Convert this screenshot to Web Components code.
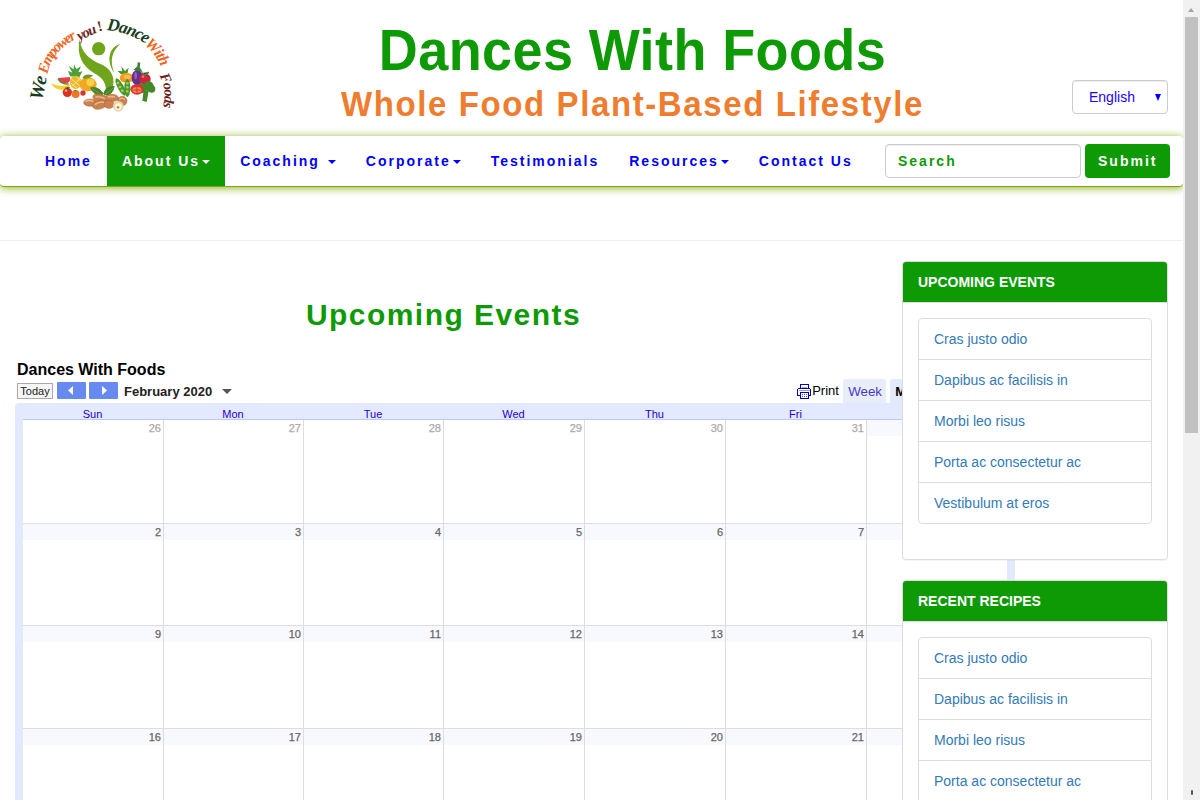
<!DOCTYPE html>
<html lang="en">
<head>
<meta charset="utf-8">
<title>Dances With Foods</title>
<style>
html,body{margin:0;height:100%;overflow:hidden;background:#fff}
body{font:14px/20px "Liberation Sans",Arial,sans-serif;color:#333}
</style>
</head>
<body>
<dwf-app></dwf-app>
<script>
const define = (name, html, init) => customElements.define(name, class extends HTMLElement {
  constructor() {
    super();
    this.attachShadow({ mode: 'open' }).innerHTML = typeof html === 'function' ? html(this) : html;
    if (init) init(this);
  }
});

define('dwf-logo', `
<style>:host{display:block;width:170px;height:115px}svg{display:block}text{font-family:"Liberation Serif",serif;font-style:italic;font-weight:bold}</style>
<svg width="170" height="115" viewBox="0 0 510 345">
  <defs>
    <path id="p1" d="M66 288L86 195"/><path id="p2" d="M82 208Q96 130 190 92"/><path id="p3" d="M178 107L265 68"/>
    <path id="p4" d="M260 76Q322 78 390 124"/><path id="p5" d="M372 120Q412 145 434 215"/><path id="p6" d="M418 212Q446 258 422 330"/>
  </defs>
  <text font-size="58" fill="#173c1c"><textPath href="#p1">We</textPath></text>
  <text font-size="45" fill="#f2661f" letter-spacing="-5.5"><textPath href="#p2">Empower</textPath></text>
  <text font-size="44" fill="#6c1f20" letter-spacing="-3"><textPath href="#p3">you !</textPath></text>
  <text font-size="52" fill="#173c1c" letter-spacing="-3"><textPath href="#p4">Dance</textPath></text>
  <text font-size="48" fill="#f2661f" letter-spacing="-3"><textPath href="#p5">With</textPath></text>
  <text font-size="43" fill="#6c1f20" letter-spacing="-3"><textPath href="#p6">Foods</textPath></text>
  <g fill="#6fa51c">
    <circle cx="236" cy="131" r="20"/>
    <path d="M179 103C184 145 210 164 243 178C279 193 290 230 272 262L256 270C263 236 249 220 222 204C187 184 169 150 179 103Z"/>
    <path d="M301 117C266 126 258 168 283 204C268 167 276 138 301 117Z"/>
  </g>
  <path d="M94 235Q120 250 152 238Q142 257 119 254Q101 251 94 235Z" fill="#f6cf2f"/>
  <path d="M114 219L150 216Q154 236 132 236Q119 234 114 219Z" fill="#e8414c"/><path d="M114 221Q122 238 146 237" fill="none" stroke="#4c962b" stroke-width="4"/>
  <path d="M150 214L144 197L157 203L146 183L161 193L162 178L169 192L183 184L175 202L187 199L178 217Z" fill="#4ca03b"/>
  <ellipse cx="167" cy="232" rx="17" ry="20" fill="#eeb72c"/><path d="M154 222L180 243M152 234L171 250M180 221L156 244M170 215L184 230" stroke="#fae68c" stroke-width="3"/>
  <ellipse cx="204" cy="238" rx="26" ry="21" fill="#f4a721"/><ellipse cx="211" cy="232" rx="12" ry="11" fill="#ffd04c"/><path d="M187 220Q193 204 219 211Q207 224 187 220Z" fill="#6b9b27"/>
  <circle cx="142" cy="262" r="14" fill="#d93325"/><circle cx="138" cy="257" r="4" fill="#ff9b7d"/>
  <circle cx="167" cy="267" r="12" fill="#ed7928"/><circle cx="189" cy="264" r="8" fill="#d33831"/><path d="M137 248L143 252L149 247M163 256L169 258" stroke="#397f2d" stroke-width="3"/>
  <path d="M303 208L292 197L307 199L304 184L315 198L326 188L322 208Z" fill="#4b9629"/>
  <ellipse cx="320" cy="219" rx="21" ry="15" fill="#f59a1e"/><ellipse cx="322" cy="215" rx="11" ry="6" fill="#ffbd51"/>
  <ellipse cx="352" cy="218" rx="17" ry="23" fill="#65308b"/><ellipse cx="347" cy="212" rx="4" ry="11" fill="#9564b0"/><path d="M340 195L352 184L353 172L361 173L359 187L368 201Z" fill="#378333"/>
  <circle cx="375" cy="222" r="17" fill="#ce213c"/><circle cx="369" cy="215" r="4" fill="#f06d77"/><path d="M366 204L375 209L387 202" stroke="#468734" stroke-width="5"/>
  <g fill="#438a27"><circle cx="365" cy="250" r="15"/><circle cx="386" cy="244" r="15"/><circle cx="395" cy="252" r="11"/><path d="M371 255L386 258L380 291L367 287Z"/></g>
  <ellipse cx="351" cy="253" rx="20" ry="16" fill="#d7342a"/><ellipse cx="351" cy="255" rx="14" ry="9" fill="#f48457"/><path d="M351 246V264M340 255H362" stroke="#d7342a" stroke-width="3"/>
  <g fill="#4c982a"><ellipse cx="302" cy="246" rx="9" ry="29" transform="rotate(-28 302 246)"/><ellipse cx="322" cy="249" rx="9" ry="27"/></g>
  <g fill="#a5cf55"><circle cx="294" cy="234" r="4"/><circle cx="300" cy="246" r="4"/><circle cx="307" cy="257" r="4"/><circle cx="322" cy="235" r="4"/><circle cx="322" cy="247" r="4"/><circle cx="322" cy="259" r="4"/></g>
  <path d="M210 248Q237 240 253 271Q223 276 210 248ZM284 243Q254 242 248 271Q280 275 284 243Z" fill="#478426"/><path d="M215 250L245 270M280 249L253 270" stroke="#86ad55" stroke-width="2"/>
  <g fill="#c9824f" stroke="#a86233" stroke-width="1.5">
    <ellipse cx="211" cy="293" rx="20" ry="11"/><ellipse cx="240" cy="279" rx="22" ry="11" transform="rotate(14 240 279)"/>
    <ellipse cx="275" cy="279" rx="21" ry="11"/><ellipse cx="239" cy="299" rx="22" ry="13" transform="rotate(-15 239 299)"/>
    <ellipse cx="267" cy="298" rx="15" ry="12"/><circle cx="307" cy="288" r="14"/>
  </g>
  <path d="M196 290Q210 282 220 290M226 276Q240 273 255 281M224 299Q238 288 252 292M263 275H285M298 283Q306 276 315 284" fill="none" stroke="#e8b488" stroke-width="5"/>
  <circle cx="295" cy="304" r="16" fill="#e8d4ab"/><circle cx="295" cy="305" r="10" fill="#fff6dc"/><circle cx="294" cy="307" r="4" fill="#bf8a5c"/>
</svg>`);

define('dwf-header', `
<style>
:host{display:grid;grid-template-columns:170px 1fr 96px;height:135px;box-sizing:border-box;padding:0 15px 0 20px}
dwf-logo{margin-top:5px}
.t{text-align:center;white-space:nowrap;font-weight:bold;padding-right:0;margin-left:3px}
h1,h2{margin:0;font-weight:bold}
h1{font-size:54px;line-height:60px;letter-spacing:.4px;color:#0e9a05;transform:scaleY(1.07);transform-origin:0 49px;padding-top:20px;height:60px}
h2{font-size:33px;line-height:40px;letter-spacing:1.6px;color:#ef7d30;transform:scaleY(1.05);margin-top:4px}
.s{align-self:start;margin-top:80px;width:96px;height:34px;box-sizing:border-box;border:1px solid #ccc;border-radius:4px;box-shadow:inset 0 1px 1px rgba(0,0,0,.075);display:flex;align-items:center;justify-content:space-between;padding:0 6px 0 16px;color:#1a00ff}
.s svg{display:block}
</style>
<dwf-logo></dwf-logo>
<div class="t"><h1>Dances With Foods</h1><h2>Whole Food Plant-Based Lifestyle</h2></div>
<div class="s"><span>English</span><svg width="6" height="7"><path d="M0 0H6L3 7Z" fill="#00f"/></svg></div>`);

define('nav-item', el => `
<style>
:host{display:block;padding:15px;line-height:20px;height:20px;white-space:nowrap}
:host([active]){background:#0e9a05;color:#fff}
i{display:inline-block;border:4px solid transparent;border-top-color:currentColor;border-bottom:0;margin-left:2px;vertical-align:middle}
</style><slot></slot>${el.hasAttribute('menu') ? '<i></i>' : ''}`);

define('dwf-nav', `
<style>
:host{display:flex;height:50px;margin-top:1px;padding:0 13px 0 30px;border-bottom:1px solid #7fa60d;border-radius:4px;background:#fff;box-shadow:0 1px 9px rgba(128,170,0,.9);font-weight:bold;letter-spacing:2px;color:#00f;clip-path:inset(-15px 0 -15px 0)}
.f{margin-left:auto;display:flex;gap:4px;align-items:center}
.f div{box-sizing:border-box;height:34px;border-radius:4px;line-height:20px}
.in{width:196px;padding:6px 12px;border:1px solid #ccc;box-shadow:inset 0 1px 1px rgba(0,0,0,.075);color:#0e9a05}
.b{width:85px;padding:7px 0 7px 13px;background:#0e9a05;color:#fff}
</style>
<nav-item>Home</nav-item><nav-item menu active>About Us</nav-item><nav-item menu>Coaching </nav-item><nav-item menu>Corporate</nav-item><nav-item>Testimonials</nav-item><nav-item menu>Resources</nav-item><nav-item>Contact Us</nav-item>
<div class="f"><div class="in">Search</div><div class="b">Submit</div></div>`);

// The Saturday column lies under the sidebar, so its cells carry no label.
const days = ['Sun','Mon','Tue','Wed','Thu','Fri',''];
const weeks = [26, 33, 40, 47].map(s => days.map((name, d) => {
  const n = s + d;
  return name ? (n > 31 ? n - 31 : n) : '';
}));
define('dwf-calendar', () => `
<style>
:host{display:block;width:1000px;color:#000}
.title{font-weight:bold;font-size:16px;line-height:20px;padding-left:2px;position:relative;top:1px}
.bar{display:flex;height:24px;align-items:flex-start;padding-left:2px}
.today{box-sizing:border-box;width:36px;height:16px;margin:4px 4px 0 0;border:1px solid #aaa;background:#f6f6f6;font-size:11px;line-height:14px;text-align:center;color:#222}
.ar{width:29px;height:17px;margin:3px 3px 0 0;background:#668aef;border-radius:1px}
.ar svg,.c,.pr svg{display:block}
b.m{font-size:13px;line-height:16px;margin:5px 10px 0 3px;color:#222}
.c{margin-top:10px}
.pr{display:flex;gap:0;margin-left:565px;font-size:13px;line-height:16px;padding-top:4px;width:46px}
.pr svg{margin-top:1px}
.tab{box-sizing:border-box;height:24px;border-radius:3px 3px 0 0;background:#e8eef7;color:#4a35cc;font-size:13.3px;line-height:20px;padding:3px 5px 0;width:43px;margin-right:4px}
.tab.on{background:#e3e9ff;color:#000;font-size:13px;font-weight:bold;width:52px}
.g{background:#e3e9ff;padding:0 8px;border-radius:4px 0 0 0}
.h,.r{display:grid;grid-template-columns:141px 140px 140px 141px 141px 141px 140px}
.h{height:16px;border-bottom:1px solid #b9caf6;font-size:11px;line-height:22px;text-align:center;color:#20c}
.h div{padding-right:2px}
.r{height:102px;background:#fff;border-bottom:1px solid #ddd}
.r:nth-child(2){height:103px}.r:nth-child(3){height:101px}
.d{border-right:1px solid #ddd}
.d:last-child{border-right:0}
.d span{display:block;height:16px;line-height:17px;font-size:11px;-webkit-text-stroke:.25px;text-align:right;padding-right:2px;background:#f7f9ff;color:#666}
.d.o span{background:#fff;color:#aaa}
</style>
<div class="title">Dances With Foods</div>
<div class="bar"><div class="today">Today</div>
<div class="ar"><svg width="29" height="17"><path d="M16 4V13L11 8.5Z" fill="#fff"/></svg></div><div class="ar"><svg width="29" height="17"><path d="M13 4V13L18 8.5Z" fill="#fff"/></svg></div>
<b class="m">February 2020</b><svg class="c" width="10" height="5"><path d="M0 0H10L5 5Z" fill="#555"/></svg>
<div class="pr"><svg width="15" height="15" viewBox="0 0 15 15" shape-rendering="crispEdges"><g fill="none" stroke="#0000c8"><path d="M3.5 5V.5H11.5V5M3.5 11.5H.5V5.5L1.5 4.5H12.5L13.5 5.5V11.5H11.5"/><path d="M3.5 8.5H11.5V14.5H3.5Z" fill="#fff"/></g><path d="M5 3h5M2 6h11" stroke="#9ab"/><path d="M5 10.5h1m1 0h1m1 0h1M5 12.5h1m1 0h1m1 0h1" stroke="#55c"/></svg><span>Print</span></div>
<div class="tab">Week</div><div class="tab on">Month</div></div>
<div class="g"><div class="h">${days.map(d => `<div>${d}</div>`).join('')}</div>
${weeks.map((w, i) => `<div class="r">${w.map(n => `<div class="d${i === 0 && n > 20 ? ' o' : ''}"><span>${n}</span></div>`).join('')}</div>`).join('')}</div>`);

define('side-panel', el => `
<style>
:host{display:block;box-sizing:border-box;width:266px;height:299px;border:1px solid #ddd;border-radius:4px;background:#fff;box-shadow:0 1px 1px rgba(0,0,0,.05)}
h3{margin:0;height:40px;box-sizing:border-box;padding:10px 15px;font-size:14px;line-height:20px;background:#0e9a05;color:#fff;border-radius:3px 3px 0 0;border-bottom:0}
ul{list-style:none;margin:16px 15px 0;padding:0;border:1px solid #ddd;border-radius:4px}
li{padding:10px 15px;line-height:20px;color:#337ab7}
li+li{border-top:1px solid #ddd}
.l{height:1px;background:#ddd;margin-bottom:-1px}
</style>
<h3>${el.getAttribute('heading')}</h3><div class="l"></div>
<ul><li>Cras justo odio</li><li>Dapibus ac facilisis in</li><li>Morbi leo risus</li><li>Porta ac consectetur ac</li>${el.hasAttribute('short') ? '' : '<li>Vestibulum at eros</li>'}</ul>`);

define('scroll-track', `
<style>
:host{display:flex;flex-direction:column;justify-content:space-between;align-items:center;background:#f1f1f1;height:800px;box-sizing:border-box;padding-bottom:5px}
svg{display:block;height:17px}div.t{width:13px;height:416px;background:#c1c1c1}
p{margin:0;width:2px;height:5px;background:#555;border-radius:1px}
</style>
<div><svg width="13" height="17"><path d="M3 12L6 8L9 12Z" fill="#a3a3a3"/></svg><div class="t"></div></div><p></p>`);

define('dwf-app', `
<style>
:host{display:grid;grid-template-columns:1183px 17px;height:800px;overflow:hidden}
.page{height:800px;overflow:hidden}
hr{margin:53px 0 0;border:0;height:1px;background:#eee}
.main{display:grid;grid-template-columns:887px 266px;padding-left:15px}
.left{min-width:0}
h2{margin:54px 30px 0 0;font-size:30px;line-height:40px;letter-spacing:1.45px;color:#0e9a05;text-align:center}
dwf-calendar{margin-top:24px}
aside{display:flex;flex-direction:column;gap:20px;padding-top:20px;z-index:1;align-self:start}
</style>
<div class="page"><dwf-header></dwf-header><dwf-nav></dwf-nav><hr>
<div class="main"><div class="left"><h2>Upcoming Events</h2><dwf-calendar></dwf-calendar></div>
<aside><side-panel heading="UPCOMING EVENTS"></side-panel><side-panel heading="RECENT RECIPES"></side-panel></aside></div></div>
<scroll-track></scroll-track>`);
</script>
</body>
</html>
